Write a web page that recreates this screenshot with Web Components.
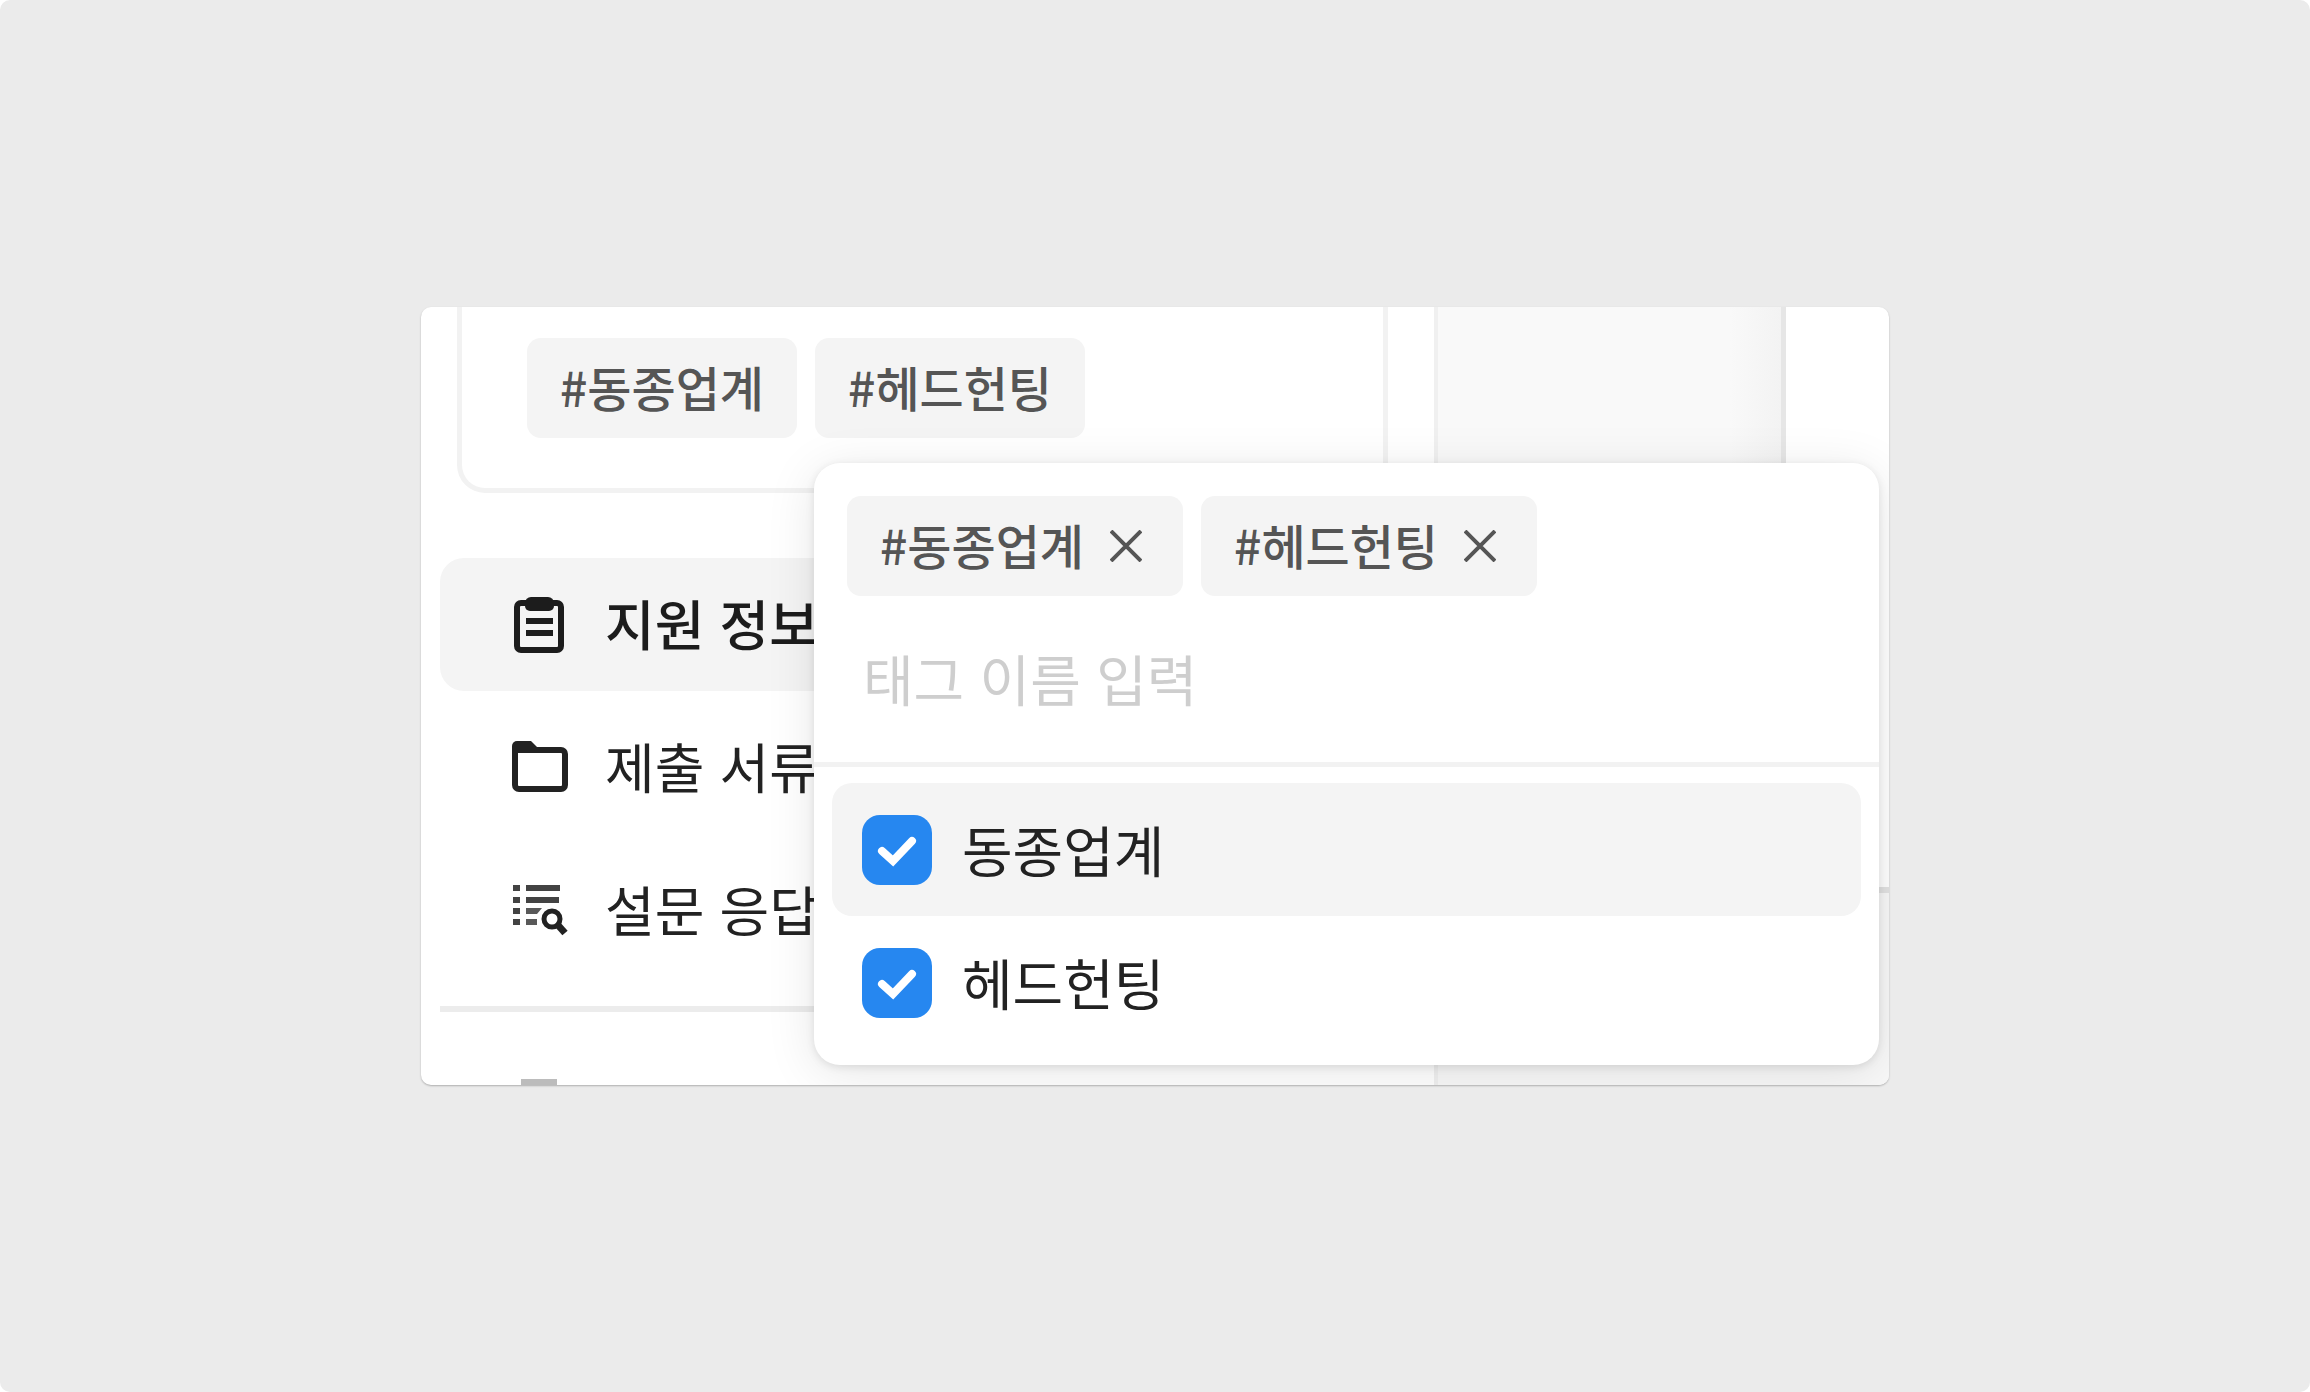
<!DOCTYPE html>
<html lang="ko">
<head>
<meta charset="utf-8">
<title>태그</title>
<style>
  html { background: #fff; }
  body {
    margin: 0;
    font-family: "Noto Sans CJK KR", "Noto Sans", sans-serif;
    color: #222;
  }
</style>
</head>
<body>
<app-stage>
  <split-view>
    <applicant-card slot="side">
      <tag-chip>#동종업계</tag-chip>
      <tag-chip>#헤드헌팅</tag-chip>
    </applicant-card>
    <side-menu slot="side">
      <menu-link icon="clipboard" active>지원 정보</menu-link>
      <menu-link icon="folder">제출 서류</menu-link>
      <menu-link icon="survey">설문 응답</menu-link>
    </side-menu>
    <tag-picker slot="popup">
      <tag-chip slot="chosen" removable>#동종업계</tag-chip>
      <tag-chip slot="chosen" removable>#헤드헌팅</tag-chip>
      <tag-option highlighted>동종업계</tag-option>
      <tag-option>헤드헌팅</tag-option>
    </tag-picker>
  </split-view>
</app-stage>

<script>
const define = (name, html, setup) => {
  const template = document.createElement('template');
  template.innerHTML = '<style>*{box-sizing:border-box}</style>' + html;
  customElements.define(name, class extends HTMLElement {
    constructor() {
      super();
      this.attachShadow({ mode: 'open' }).append(template.content.cloneNode(true));
    }
    connectedCallback() {
      if (setup) setup(this, this.shadowRoot);
    }
  });
};

const ICONS = {
  clipboard: `
    <rect x="8" y="8" width="44" height="47" rx="4" fill="none" stroke="currentColor" stroke-width="6"/>
    <path d="M22 2h17a6 6 0 0 1 6 6v3a5 5 0 0 1-5 5H21a5 5 0 0 1-5-5V8a6 6 0 0 1 6-6z" fill="currentColor"/>
    <path d="M17 26h27M17 38h27" fill="none" stroke="currentColor" stroke-width="6"/>`,
  folder: `
    <path d="M6 14v33a4 4 0 0 0 4 4h42a4 4 0 0 0 4-4V16a4 4 0 0 0-4-4H8z" fill="none" stroke="currentColor" stroke-width="6"/>
    <path d="M3 15V8a5 5 0 0 1 5-5h14l8 8v4z" fill="currentColor"/>`,
  survey: `
    <path d="M4 7h7M4 19h7M4 30h7M4 41h7M17 7h34M17 19h33" fill="none" stroke="currentColor" stroke-width="6" opacity=".85"/>
    <path d="M17 27h16l-5 6H17zM17 38h11v6H17z" fill="currentColor" opacity=".75"/>
    <circle cx="43" cy="38" r="8" fill="none" stroke="currentColor" stroke-width="5"/>
    <path d="M48 43l8 9" fill="none" stroke="currentColor" stroke-width="7"/>`
};

define('app-stage', `
  <style>
    :host {
      display: flex; align-items: center; justify-content: center;
      min-height: 100vh; background: #ebebeb; border-radius: 10px;
    }
  </style>
  <slot></slot>`);

define('split-view', `
  <style>
    :host {
      display: flex; position: relative; overflow: hidden; width: 63.55%;
      background: #fff; border-radius: 10px;
      box-shadow: 0 1px 2px rgba(0,0,0,.26);
    }
    .side { flex: 0 0 69%; }
    .content { flex: 1; display: flex; flex-direction: column; border-left: 4px solid #f0f0f0; }
    .upper { flex: 0 0 74.5%; display: flex; }
    .board {
      flex: 1; background: linear-gradient(90deg, #f9f9f9 85%, #f3f3f3);
      border-right: 5px solid #e6e6e6;
    }
    .end { flex: 0 0 103px; }
    .lower { flex: 1; background: #f8f8f8; border-top: 6px solid #e2e2e2; }
    .popup { position: absolute; left: 393px; right: 10px; top: 156px; }
  </style>
  <div class="side"><slot name="side"></slot></div>
  <div class="content">
    <div class="upper"><div class="board"></div><div class="end"></div></div>
    <div class="lower"></div>
  </div>
  <div class="popup"><slot name="popup"></slot></div>`);

define('applicant-card', `
  <style>
    :host {
      display: flex; gap: 18px; margin: 0 46px 65px 36px; padding: 31px 65px 50px;
      border: 5px solid #f2f2f2; border-top: 0; border-radius: 0 0 28px 28px;
      box-sizing: border-box;
    }
  </style>
  <slot></slot>`);

define('tag-chip', `
  <style>
    :host {
      display: flex; align-items: center; gap: 26px; height: 100px; padding: 0 33px;
      background: #f4f4f4; border-radius: 14px; box-sizing: border-box;
      font-size: 48px; line-height: 72px; font-weight: 500; color: #555; white-space: nowrap;
    }
    :host([removable]) { padding-right: 41px; }
    span { padding-bottom: 4px; }
    button { display: flex; border: 0; padding: 0; background: none; color: inherit; }
    button[hidden] { display: none; }
    svg { width: 32px; height: 32px; }
  </style>
  <span><slot></slot></span>
  <button type="button" aria-label="삭제" hidden>
    <svg viewBox="0 0 32 32"><path d="M1 1l30 30M31 1L1 31" stroke="currentColor" stroke-width="4" fill="none"/></svg>
  </button>`,
  (el, root) => { root.querySelector('button').hidden = !el.hasAttribute('removable'); });

define('side-menu', `
  <style>
    :host { display: block; padding: 0 19px; }
    nav { display: flex; flex-direction: column; gap: 10px; }
    hr { margin: 29px 0 67px; border: 0; height: 6px; background: #ececec; }
    .next { width: 36px; height: 6px; margin-left: 81px; background: #bcbcbc; }
  </style>
  <nav><slot></slot></nav>
  <hr>
  <div class="next"></div>`);

define('menu-link', `
  <style>
    :host { display: block; }
    a {
      display: flex; align-items: center; gap: 36px; height: 133px; padding: 0 69px;
      border-radius: 24px; color: #222; text-decoration: none;
      font-size: 54px; line-height: 80px; white-space: nowrap;
    }
    :host([active]) a { background: #f4f4f4; color: #1c1c1c; font-weight: 500; }
    span { padding-bottom: 4px; }
    svg { width: 60px; height: 60px; flex: none; }
  </style>
  <a href="#"><svg viewBox="0 0 60 60" aria-hidden="true"></svg><span><slot></slot></span></a>`,
  (el, root) => { root.querySelector('svg').innerHTML = ICONS[el.getAttribute('icon')]; });

define('tag-picker', `
  <style>
    :host {
      display: block; background: #fff; border-radius: 26px;
      box-shadow: 0 8px 50px rgba(0,0,0,.1), 0 2px 8px rgba(0,0,0,.1);
    }
    .chosen { display: flex; flex-wrap: wrap; gap: 18px; padding: 33px 33px 0; }
    input {
      display: block; width: 100%; height: 166px; padding: 0 49px 4px; border: 0; outline: 0;
      background: none; font: inherit; font-size: 55px; color: #222;
    }
    input::placeholder { color: #cecece; opacity: 1; }
    .options { border-top: 5px solid #f2f2f2; padding: 16px 18px; }
  </style>
  <div class="chosen"><slot name="chosen"></slot></div>
  <input type="text" placeholder="태그 이름 입력" aria-label="태그 이름 입력">
  <div class="options"><slot></slot></div>`);

define('tag-option', `
  <style>
    :host { display: block; border-radius: 20px; }
    :host([highlighted]) { background: #f4f4f4; }
    label {
      display: flex; align-items: center; gap: 30px; height: 133px; padding: 0 30px;
      font-size: 55px; line-height: 80px; white-space: nowrap;
    }
    .text { padding-bottom: 4px; }
    .box { display: grid; }
    input, svg { grid-area: 1 / 1; width: 70px; height: 70px; margin: 0; }
    input { appearance: none; background: #fff; border: 3px solid #ccc; border-radius: 18px; }
    input:checked { background: #2687f0; border: 0; }
    svg { pointer-events: none; }
  </style>
  <label>
    <span class="box">
      <input type="checkbox" checked>
      <svg viewBox="0 0 70 70" aria-hidden="true"><path d="M20 36l11 10 19-20" fill="none" stroke="#fff" stroke-width="8" stroke-linecap="round"/></svg>
    </span>
    <span class="text"><slot></slot></span>
  </label>`);
</script>
</body>
</html>
